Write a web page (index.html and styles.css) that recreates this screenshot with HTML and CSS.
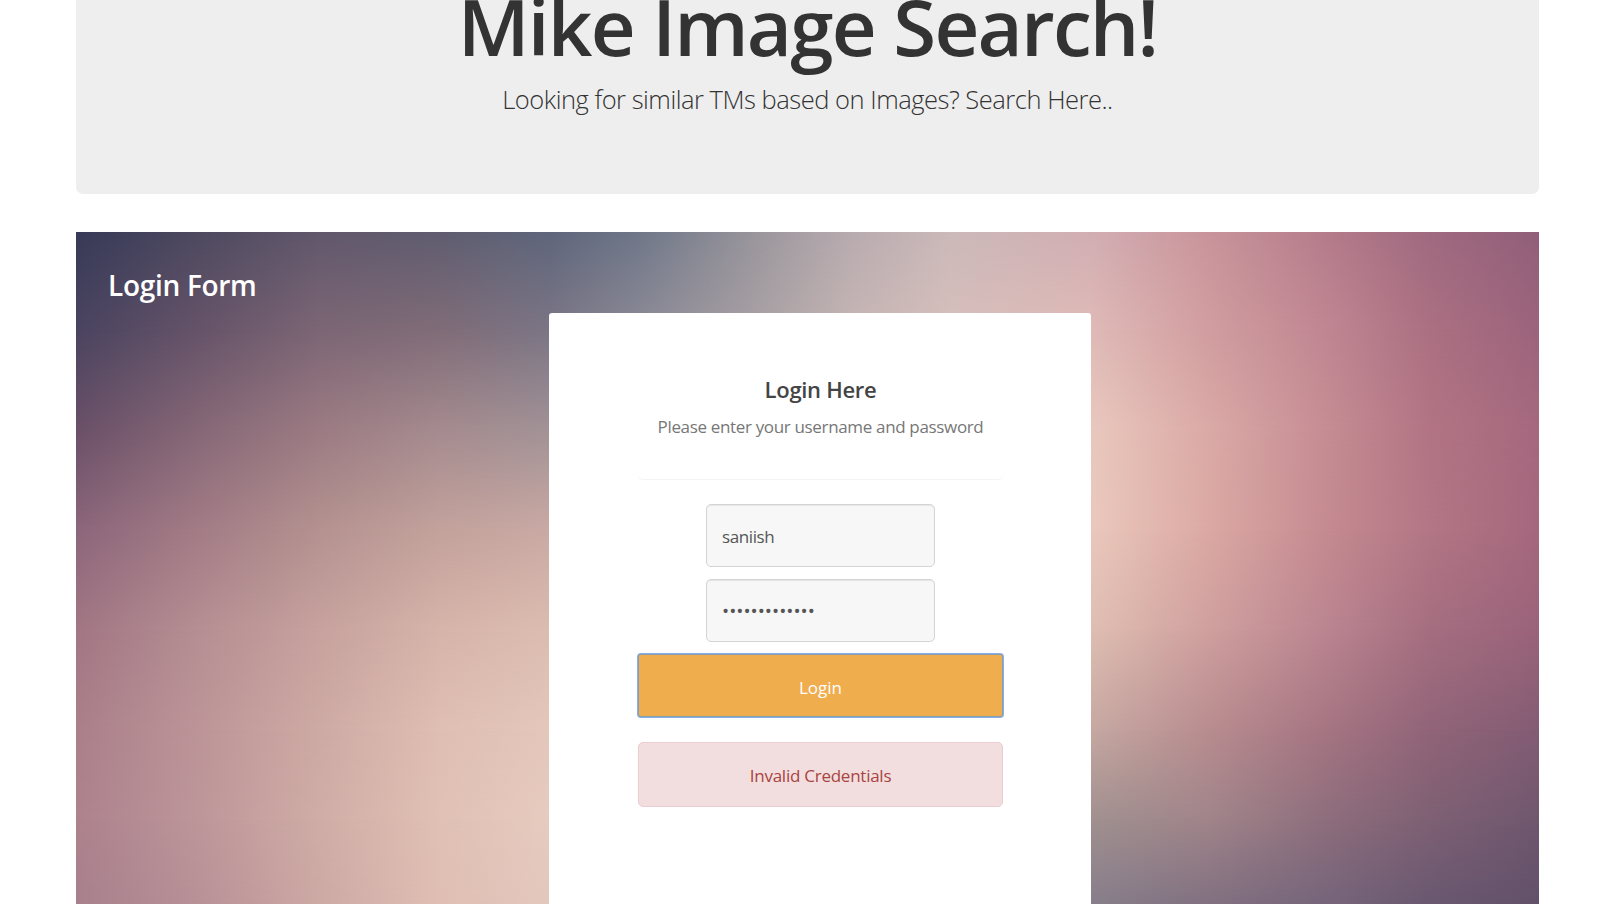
FILE: index.html
```html
<!DOCTYPE html>
<html lang="en">
<head>
<meta charset="utf-8">
<title>Mike Image Search!</title>
<link rel="stylesheet" href="styles.css">
</head>
<body>
<header class="jumbotron">
  <h1 class="site-title">Mike Image Search!</h1>
  <p class="lead">Looking for similar TMs based on Images? Search Here..</p>
</header>
<main class="hero">
  <div class="mesh m1"></div>
  <div class="mesh m2"></div>
  <div class="mesh m3"></div>
  <div class="mesh m4"></div>
  <div class="mesh m5"></div>
  <div class="mesh m6"></div>
  <div class="mesh m7"></div>
  <div class="mesh m8"></div>
  <div class="content">
    <h2 class="form-title">Login Form</h2>
    <section class="card">
      <div class="panel">
        <h3 class="panel-title">Login Here</h3>
        <p class="panel-text">Please enter your username and password</p>
      </div>
      <form class="login">
        <div class="field user">saniish</div>
        <div class="field pass">•••••••••••••</div>
        <button class="btn" type="button">Login</button>
      </form>
      <div class="alert">Invalid Credentials</div>
    </section>
  </div>
</main>
</body>
</html>
```
FILE: styles.css
```css
* { box-sizing: border-box; }
html, body { height: 100%; }
body {
  margin: 0;
  padding: 0 76px;
  overflow: hidden;
  background: #fff;
  font-family: "Open Sans", "Noto Sans", sans-serif;
  color: #333;
}
h1, h2, h3, p { margin: 0; font-weight: 600; white-space: nowrap; }

.jumbotron {
  display: flow-root;
  height: 194px;
  background: #eee;
  border-radius: 0 0 7px 7px;
  text-align: center;
}
.site-title { margin-top: -14px; font-size: 78px; line-height: 80px; letter-spacing: -1.8px; }
.lead { margin-top: 13px; font-size: 25.5px; line-height: 40px; font-weight: 300; letter-spacing: -.48px; }

.hero {
  display: grid;
  width: 1462.5px;
  height: 672px;
  margin-top: 38px;
}
.mesh, .content { grid-area: 1 / 1; }
.content { position: relative; overflow: hidden; }

/* Backdrop: horizontal colour bands, each fading into the next */
.m1 { background: linear-gradient(90deg, #373a58 0, #4e4a60 124px, #62586c 244px, #605d70 364px, #5f667c 473px, #6f7789 564px, #9b979d 684px, #b8abb0 774px, #ccb9b9 874px, #d2aeb3 1015px, #c9949b 1134px, #b47b8a 1254px, #a06a80 1354px, #915f7a 1463px); }
.m2 { background: linear-gradient(90deg, #4a4460 0, #665369 124px, #7c6675 244px, #806c78 364px, #7b7585 473px, #8c8a96 564px, #aaa1a5 684px, #c5b5b3 774px, #d6bfbc 874px, #dfbab7 1015px, #d19d9f 1134px, #bf8692 1254px, #ab7082 1354px, #9c647c 1463px); }
.m3 { background: linear-gradient(90deg, #6a5068 0, #866877 124px, #9c7b83 244px, #a58b8f 364px, #a29296 473px, #e9c8be 1015px, #daa9a6 1134px, #c58c93 1254px, #b27484 1354px, #a5687e 1463px); }
.m4 { background: linear-gradient(90deg, #8c667b 0, #a37c86 124px, #b49290 244px, #c3a29c 364px, #caa9a4 473px, #eac8bc 1015px, #dba8a3 1134px, #c48a90 1254px, #b27685 1354px, #a5677d 1463px); }
.m5 { background: linear-gradient(90deg, #a27684 0, #b58f93 124px, #c7a29e 244px, #d6b4aa 364px, #dcbcb0 473px, #dfbeb2 1015px, #cf9f9e 1134px, #ba8490 1254px, #a56e80 1354px, #9a637a 1463px); }
.m6 { background: linear-gradient(90deg, #aa7f8a 0, #bd9598 124px, #ceaaa4 244px, #dfbeb3 364px, #e4c7bb 473px, #c6a8a2 1015px, #b88c8f 1134px, #a57482 1254px, #916478 1354px, #835c74 1463px); }
.m7 { background: linear-gradient(90deg, #ad828d 0, #bd969a 124px, #d0ada6 244px, #e0c0b5 364px, #e7cbc0 473px, #a0908f 1015px, #a0848a 1134px, #8d6d7c 1254px, #7e6074 1354px, #6f576e 1463px); }
.m8 { background: linear-gradient(90deg, #a77f8c 0, #b89197 124px, #cda9a4 244px, #dfbeb4 364px, #e3c7bd 473px, #877e8b 1015px, #817080 1134px, #75647a 1254px, #695870 1354px, #62506a 1463px); }
.m2 { mask-image: linear-gradient(transparent 0, #000 98px); }
.m3 { mask-image: linear-gradient(transparent 98px, #000 198px); }
.m4 { mask-image: linear-gradient(transparent 198px, #000 298px); }
.m5 { mask-image: linear-gradient(transparent 298px, #000 398px); }
.m6 { mask-image: linear-gradient(transparent 398px, #000 498px); }
.m7 { mask-image: linear-gradient(transparent 498px, #000 588px); }
.m8 { mask-image: linear-gradient(transparent 588px, #000 672px); }

.form-title { margin: 33px 0 0 32px; height: 48px; font-size: 28px; line-height: 40px; letter-spacing: -.3px; color: #fff; }
.card {
  width: 542px;
  height: 640px;
  margin-left: 473px;
  padding: 60px 88px 0 89px;
  background: #fff;
  border-radius: 3px;
}
.panel {
  height: 106px;
  border-radius: 5px;
  text-align: center;
  box-shadow: 0 1px 1px rgba(0, 0, 0, .05);
}
.panel-title { font-size: 22px; line-height: 32px; letter-spacing: -.3px; color: #444; }
.panel-text { padding-top: 9px; font-size: 17px; line-height: 26px; font-weight: 400; letter-spacing: -.34px; color: #777; }
.login { display: flex; flex-direction: column; align-items: center; padding-top: 25px; gap: 12px; }
.field {
  width: 229px;
  height: 63px;
  padding-left: 15px;
  border: 1px solid #d4d4d4;
  border-radius: 5px;
  background: #f7f7f7;
  box-shadow: inset 0 1px 1px rgba(0, 0, 0, .075);
  font-size: 17px;
  line-height: 63px;
  letter-spacing: -.4px;
  color: #555;
}
.pass { font-size: 19px; letter-spacing: 0; }
.btn {
  width: 365px;
  height: 63px;
  padding: 3px 0 0;
  border: 0;
  border-radius: 3px;
  background: #f0ad4e;
  box-shadow: 0 0 0 1px #86aee8, inset 0 0 0 1px #899fae;
  color: #fff;
  font: 17px "Open Sans", sans-serif;
}
.alert {
  height: 65px;
  margin-top: 25px;
  border: 1px solid #ebccd1;
  border-radius: 5px;
  background: #f2dede;
  color: #a94442;
  font-size: 17px;
  line-height: 65px;
  letter-spacing: -.25px;
  text-align: center;
}
```
